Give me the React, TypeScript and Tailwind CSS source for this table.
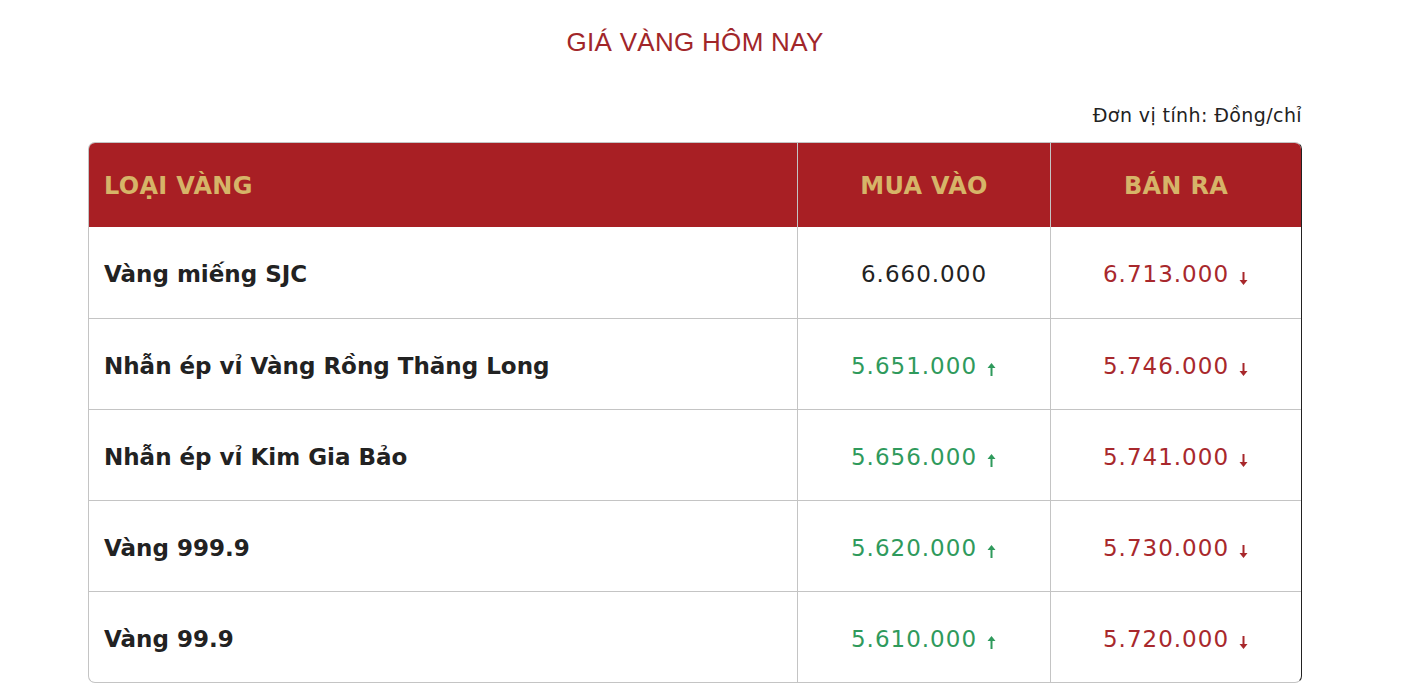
const rows = [
  { name: "Vàng miếng SJC", buy: "6.660.000", buyDir: "", sell: "6.713.000", sellDir: "down" },
  { name: "Nhẫn ép vỉ Vàng Rồng Thăng Long", buy: "5.651.000", buyDir: "up", sell: "5.746.000", sellDir: "down" },
  { name: "Nhẫn ép vỉ Kim Gia Bảo", buy: "5.656.000", buyDir: "up", sell: "5.741.000", sellDir: "down" },
  { name: "Vàng 999.9", buy: "5.620.000", buyDir: "up", sell: "5.730.000", sellDir: "down" },
  { name: "Vàng 99.9", buy: "5.610.000", buyDir: "up", sell: "5.720.000", sellDir: "down" },
];

function Arrow({ dir }: { dir: string }) {
  if (!dir) return null;
  const up = dir === "up";
  return (
    <svg width="11" height="16" viewBox="0 0 11 16" className="ml-[9px] mt-[6px] shrink-0">
      {up ? (
        <path d="M5.5 2 L1.5 7 H4.5 V15 H6.5 V7 H9.5 Z" fill="currentColor" />
      ) : (
        <path d="M5.5 15 L1.5 10 H4.5 V2 H6.5 V10 H9.5 Z" fill="currentColor" />
      )}
    </svg>
  );
}

function Price({ value, dir }: { value: string; dir: string }) {
  const color = dir === "up" ? "text-[#2f9a5c]" : dir === "down" ? "text-[#a8282c]" : "text-[#222]";
  return (
    <span className={`flex items-center ${color}`}>
      <span>{value}</span>
      <Arrow dir={dir} />
    </span>
  );
}

export default function App() {
  const font = { fontFamily: '"DejaVu Sans", "Noto Sans", sans-serif' };
  return (
    <div className="min-h-screen bg-white" style={font}>
      <div className="ml-[88px] w-[1214px] pt-[24px]">
        <h1
          className="text-center text-[26px] font-light leading-[36px] tracking-[0.3px] text-[#a1262a]"
          style={{ fontFamily: '"Liberation Sans", sans-serif' }}
        >
          GIÁ VÀNG HÔM NAY
        </h1>
        <div className="mt-[42px] text-right text-[19px] leading-[26px] tracking-[0.4px] text-[#222]">Đơn vị tính: Đồng/chỉ</div>
        <div className="mt-[14px] overflow-hidden rounded-[7px] border border-[#c4c4c4] border-r-[#222]">
          <div className="grid h-[84px] grid-cols-[708px_253px_1fr] bg-[#a81f24] text-[24px] font-bold tracking-[0.3px] text-[#d6b468]">
            <div className="flex items-center pl-[15px] pt-[2px]">LOẠI VÀNG</div>
            <div className="flex items-center justify-center border-l border-[#c4c4c4] pt-[2px]">MUA VÀO</div>
            <div className="flex items-center justify-center border-l border-[#c4c4c4] pt-[2px]">BÁN RA</div>
          </div>
          {rows.map((r, i) => (
            <div
              key={r.name}
              className={`grid h-[91px] grid-cols-[708px_253px_1fr] text-[23px] ${i > 0 ? "border-t border-[#c4c4c4]" : ""}`}
            >
              <div className="flex items-center pl-[15px] pt-[4px] font-semibold text-[#222]">{r.name}</div>
              <div className="flex items-center justify-center border-l border-[#c4c4c4] pt-[4px] tracking-[1px]">
                <Price value={r.buy} dir={r.buyDir} />
              </div>
              <div className="flex items-center justify-center border-l border-[#c4c4c4] pt-[4px] tracking-[1px]">
                <Price value={r.sell} dir={r.sellDir} />
              </div>
            </div>
          ))}
        </div>
      </div>
    </div>
  );
}
